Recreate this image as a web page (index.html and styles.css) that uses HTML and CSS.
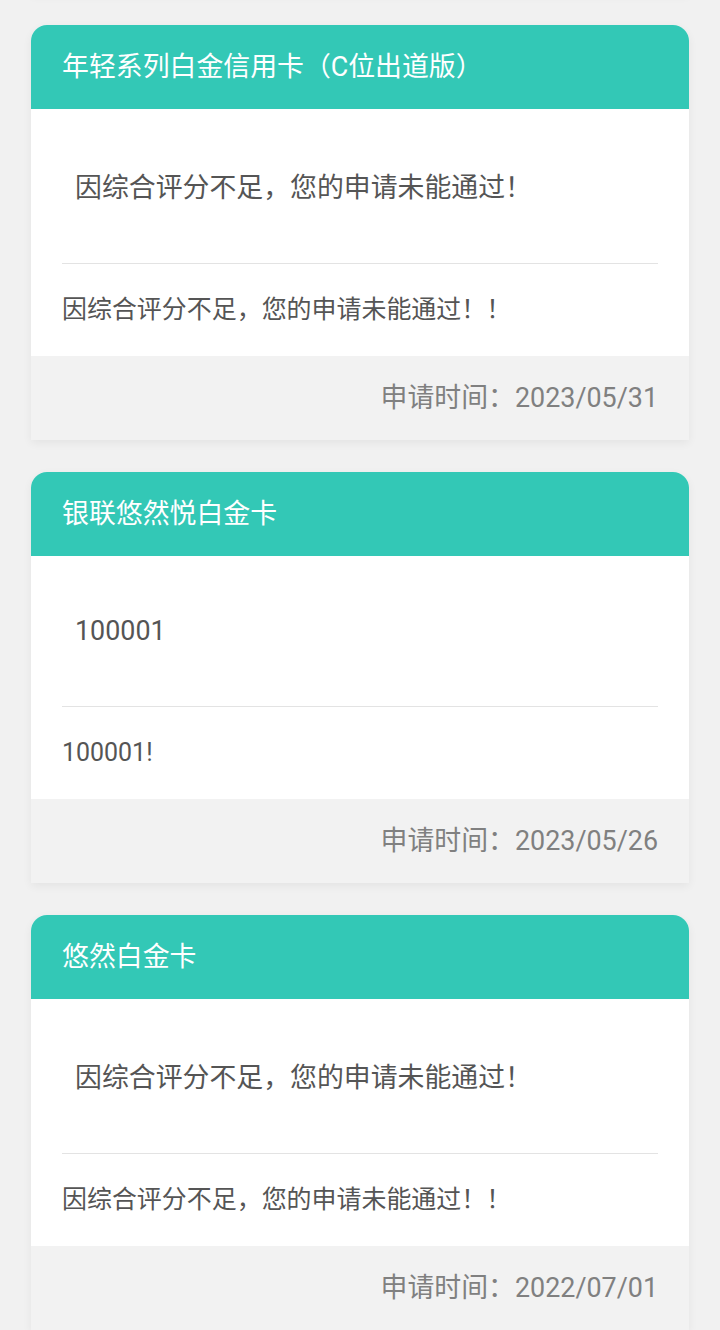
FILE: index.html
```html
<!DOCTYPE html>
<html lang="zh-CN">
<head>
<meta charset="utf-8">
<title>申请记录</title>
<link rel="stylesheet" href="styles.css">
</head>
<body>
<div class="list">
  <div class="card card-stub"></div>
  <div class="card">
    <div class="card-head">年轻系列白金信用卡（C位出道版）</div>
    <div class="card-body">
      <div class="msg-main">因综合评分不足，您的申请未能通过！</div>
      <div class="divider"></div>
      <div class="msg-sub">因综合评分不足，您的申请未能通过！！</div>
    </div>
    <div class="card-foot">申请时间：2023/05/31</div>
  </div>
  <div class="card">
    <div class="card-head">银联悠然悦白金卡</div>
    <div class="card-body">
      <div class="msg-main msg-num">100001</div>
      <div class="divider"></div>
      <div class="msg-sub">100001!</div>
    </div>
    <div class="card-foot">申请时间：2023/05/26</div>
  </div>
  <div class="card">
    <div class="card-head">悠然白金卡</div>
    <div class="card-body">
      <div class="msg-main">因综合评分不足，您的申请未能通过！</div>
      <div class="divider"></div>
      <div class="msg-sub">因综合评分不足，您的申请未能通过！！</div>
    </div>
    <div class="card-foot">申请时间：2022/07/01</div>
  </div>
</div>
</body>
</html>
```
FILE: styles.css
```css
html, body {
  margin: 0;
  padding: 0;
  background: #f1f1f1;
  font-family: "Roboto", "Noto Sans CJK SC", sans-serif;
}

.list {
  display: flex;
  flex-direction: column;
  gap: 32px;
  padding: 0 31px 40px;
  margin-top: -39px;
}

.card {
  background: #ffffff;
  border-radius: 16px 16px 0 0;
  box-shadow: 0 3px 10px rgba(0, 0, 0, 0.06);
  overflow: hidden;
}

.card-stub {
  height: 32px;
  border-radius: 0;
  background: #f2f2f2;
}

.card-head {
  height: 84px;
  line-height: 84px;
  padding-left: 31px;
  background: #33c8b6;
  color: #ffffff;
  font-size: 26.88px;
  white-space: nowrap;
}

.card-body {
  display: flex;
  flex-direction: column;
}

.msg-main {
  padding: 60px 31px 56px 44px;
  line-height: 38px;
  font-size: 26.88px;
  color: #555555;
}

.msg-num {
  padding-top: 58px;
  padding-bottom: 58px;
  line-height: 34px;
}

.divider {
  height: 1px;
  margin: 0 31px;
  background: #e3e3e3;
}

.msg-sub {
  padding: 26px 31px;
  line-height: 40px;
  font-size: 24.96px;
  color: #555555;
}

.card-foot {
  height: 84px;
  line-height: 84px;
  padding-right: 31px;
  text-align: right;
  background: #f2f2f2;
  color: #808080;
  font-size: 26.88px;
}
```
